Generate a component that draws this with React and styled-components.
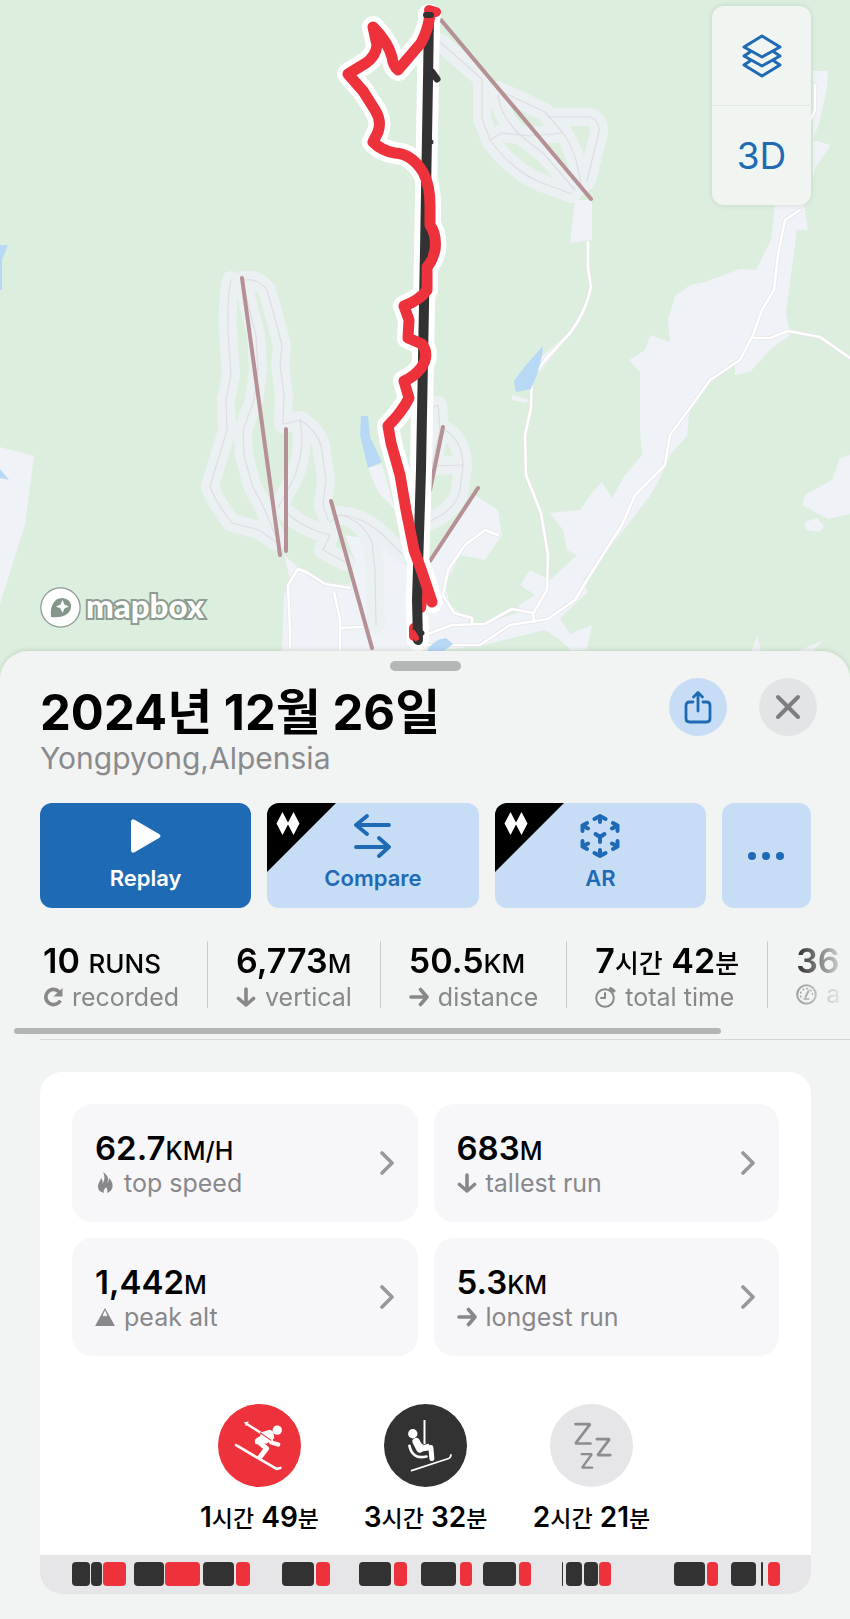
import React from "react";
import styled, { createGlobalStyle, css } from "styled-components";

const BLUE = "#1f6ab5";
const RED = "#ee323b";
const DARK = "#323232";

const GlobalStyle = createGlobalStyle`
  *, *::before, *::after { box-sizing: border-box; }
  body {
    margin: 0;
    background: #f2f4f3;
    color: #000;
    font-family: Inter, "Noto Sans CJK KR", sans-serif;
  }
  button { font: inherit; color: inherit; border: 0; margin: 0; padding: 0; background: none; cursor: pointer; }
  h1, p, ul, dl, dd, dt { margin: 0; padding: 0; }
  ul { list-style: none; }
  svg { display: block; flex: none; }
`;

const Page = styled.main`
  position: relative;
  min-width: 0;
  overflow: hidden;
`;

const MapArea = styled.section`
  position: relative;
  background: #dceede;
`;

const MapDrawing = styled.svg`
  width: 100%;
  height: auto;
`;

const MapControls = styled.div`
  position: absolute;
  top: 6px;
  right: 39px;
  width: 99px;
  display: flex;
  flex-direction: column;
  border-radius: 12px;
  background: rgba(241, 245, 241, 0.96);
  box-shadow: 0 0 5px rgba(60, 90, 60, 0.16);
`;

const MapControl = styled.button`
  height: 99px;
  display: flex;
  align-items: center;
  justify-content: center;
  color: ${BLUE};
  font-size: 37px;
  & + & { height: 100px; border-top: 1px solid #e2e8e4; }
`;

const Attribution = styled.a`
  position: absolute;
  left: 40px;
  bottom: 52px;
  display: flex;
  align-items: center;
  gap: 5px;
  color: #fff;
  font: 900 33px/34px Lato, sans-serif;
  text-decoration: none;
  -webkit-text-stroke: 4px #8d9c90;
  paint-order: stroke fill;
  span { padding-bottom: 6px; }
`;

const Sheet = styled.section`
  position: relative;
  margin-top: -29px;
  padding: 10px 0 25px;
  border-radius: 28px 28px 0 0;
  background: #f2f4f3;
  box-shadow: 0 -1px 4px rgba(60, 80, 60, 0.16);
`;

const Grabber = styled.div`
  width: 71px;
  height: 10px;
  margin: 0 auto;
  border-radius: 5px;
  background: #b5b7b7;
`;

const Header = styled.header`
  display: flex;
  align-items: flex-start;
  padding: 7px 33px 0 40px;
`;

const Heading = styled.div`
  flex: 1;
  min-width: 0;
  padding-top: 5px;
`;

const Title = styled.h1`
  font-size: 49px;
  font-weight: 700;
  line-height: 60px;
  white-space: nowrap;
`;

const Subtitle = styled.p`
  color: #8a8a8d;
  font-size: 30px;
  line-height: 30px;
`;

const HeaderButtons = styled.div`
  display: flex;
  gap: 32px;
`;

const RoundButton = styled.button`
  width: 58px;
  height: 58px;
  border-radius: 50%;
  display: flex;
  align-items: center;
  justify-content: center;
  background: ${(p) => (p.$muted ? "#e3e4e6" : "#c6ddf5")};
  color: ${(p) => (p.$muted ? "#7d7d80" : BLUE)};
`;

const Actions = styled.div`
  display: grid;
  grid-template-columns: 1fr 1fr 1fr 89px;
  gap: 16px;
  padding: 30px 39px 0 40px;
`;

const ActionButton = styled.button`
  position: relative;
  overflow: hidden;
  height: 105px;
  padding-bottom: ${(p) => (p.$iconOnly ? 0 : 8)}px;
  border-radius: 12px;
  display: flex;
  flex-direction: column;
  align-items: center;
  justify-content: center;
  gap: 9px;
  background: ${(p) => (p.$primary ? BLUE : "#c6ddf5")};
  color: ${(p) => (p.$primary ? "#fff" : BLUE)};
  font-size: 22px;
  font-weight: 600;
  line-height: 22px;
`;

const ProCorner = styled.svg`
  position: absolute;
  top: 0;
  left: 0;
`;

const StatStrip = styled.dl`
  display: flex;
  align-items: flex-start;
  overflow: hidden;
  padding: 33px 0 20px 15px;
  mask-image: linear-gradient(to right, #000 calc(100% - 66px), transparent);
`;

const Stat = styled.div`
  flex: none;
  display: flex;
  flex-direction: column-reverse;
  justify-content: flex-end;
  height: 67px;
  padding: 0 28px;
  white-space: nowrap;
  & + & { border-left: 1px solid #cbcdcd; }
`;

const Value = styled.dd`
  font-size: ${(p) => (p.$compact ? 33 : 34)}px;
  font-weight: 600;
  line-height: ${(p) => (p.$compact ? 36 : 39)}px;
  white-space: nowrap;
  small { font-size: ${(p) => (p.$compact ? 25 : 26)}px; font-weight: 500; }
`;

const Label = styled.dt`
  display: flex;
  align-items: center;
  gap: 9px;
  color: #88888b;
  font-size: 25px;
  line-height: 28px;
`;

const ScrollTrack = styled.div`
  padding: 0 14px;
`;

const ScrollThumb = styled.div`
  width: 86%;
  height: 6px;
  border-radius: 3px;
  background: #b3b5b4;
`;

const Divider = styled.div`
  margin: 5px 0 0 40px;
  height: 1px;
  background: #d6d8d7;
`;

const Card = styled.section`
  margin: 32px 39px 0 40px;
  border-radius: 22px;
  overflow: hidden;
  background: #fff;
`;

const Tiles = styled.div`
  display: grid;
  grid-template-columns: 1fr 1fr;
  gap: 16px;
  padding: 32px 32px 48px;
`;

const Tile = styled.button`
  height: 118px;
  padding: 0 24px 0 23px;
  border-radius: 20px;
  display: flex;
  align-items: center;
  justify-content: space-between;
  background: #f7f7fa;
  text-align: left;
  color: #98989b;
`;

const TileText = styled.dl`
  display: flex;
  flex-direction: column-reverse;
  ${Value} { color: #000; }
`;

const Activities = styled.ul`
  display: flex;
  justify-content: center;
  padding-bottom: 18px;
`;

const Activity = styled.li`
  width: 166px;
  display: flex;
  flex-direction: column;
  align-items: center;
  gap: 12px;
`;

const Duration = styled.span`
  font-size: 28px;
  font-weight: 600;
  line-height: 36px;
  white-space: nowrap;
  small { font-size: 23px; font-weight: 500; }
`;

const Badge = styled.div`
  width: 83px;
  height: 83px;
  border-radius: 50%;
  background: ${(p) => p.$color};
  color: ${(p) => p.$ink || "#fff"};
`;

const Timeline = styled.div`
  display: flex;
  height: 39px;
  padding: 7px 32px;
  background: #e6e6e8;
`;

const Segment = styled.div`
  flex: none;
  height: 24px;
  border-radius: 4px;
  background: ${(p) => (p.$run ? RED : DARK)};
  ${(p) => p.$thin && css`border-radius: 1px;`}
`;

const line = { fill: "none", stroke: "currentColor", strokeLinecap: "round", strokeLinejoin: "round" };

const LayersIcon = () => (
  <svg width="40" height="44" viewBox="0 0 40 44" {...line} strokeWidth="3">
    <path d="M20 2 38 13 20 23 2 13Z" />
    <path d="m8 18-6 4 18 10 18-10-6-4" />
    <path d="m8 27-6 4 18 11 18-11-6-4" />
  </svg>
);

const ShareIcon = () => (
  <svg width="28" height="34" viewBox="0 0 28 34" {...line} strokeWidth="2.800">
    <path d="M14 21V3M9.500 7 14 2.500 18.500 7" />
    <path d="M9 12H5.500Q2 12 2 15.500V28.500Q2 32 5.500 32H22.500Q26 32 26 28.500V15.500Q26 12 22.500 12H19" />
  </svg>
);

const CloseIcon = () => (
  <svg width="26" height="26" viewBox="0 0 26 26" {...line} strokeWidth="4">
    <path d="m3 3 20 20M23 3 3 23" />
  </svg>
);

const PlayIcon = () => (
  <svg width="32" height="44" viewBox="0 0 32 44">
    <path fill="currentColor" d="M1 8Q1 4 5 6L29 20Q32 22 29 24L5 38Q1 40 1 36Z" />
  </svg>
);

const CompareIcon = () => (
  <svg width="38" height="44" viewBox="0 0 38 44" {...line} strokeWidth="3.800">
    <path d="M35 11H2M13 2 2 11 13 20M2 33H35M25 24 35 33 25 42" />
  </svg>
);

const ArIcon = () => (
  <svg width="40" height="44" viewBox="0 0 40 44" {...line} strokeWidth="4">
    <path d="M14.500 5 20 2 25.500 5M20 2V8M14.500 39 20 42 25.500 39M20 42V36" />
    <path d="M2.500 17V11.500L7 9M2.500 11.500 8 14.500M37.500 17V11.500L33 9M37.500 11.500 32 14.500" />
    <path d="M2.500 27V32.500L7 35M2.500 32.500 8 29.500M37.500 27V32.500L33 35M37.500 32.500 32 29.500" />
    <path d="m15.500 20 4.500 3 4.500-3M20 23v5" />
  </svg>
);

const MoreIcon = () => (
  <svg width="36" height="8" viewBox="0 0 36 8" fill="currentColor">
    <circle cx="4" cy="4" r="4" /><circle cx="18" cy="4" r="4" /><circle cx="32" cy="4" r="4" />
  </svg>
);

const DoubleDiamond = () => (
  <ProCorner width="69" height="69" viewBox="0 0 69 69" aria-hidden="true">
    <path fill="#000" d="M0 0H69L0 69Z" />
    <path fill="#fff" d="m15.500 9 6 11.500-6 11.500-6-11.500ZM26.500 9l6 11.500-6 11.500-6-11.500Z" />
  </ProCorner>
);

const RepeatIcon = () => (
  <svg width="20" height="20" viewBox="0 0 20 20">
    <path fill="none" stroke="currentColor" strokeWidth="3.600" d="M16 4.800A7.600 7.600 0 1 0 17.200 13.500" />
    <path fill="currentColor" d="M19.500 1V9.500H10.500Z" />
  </svg>
);

const DownIcon = () => (
  <svg width="20" height="20" viewBox="0 0 20 20" {...line} strokeWidth="3.600"><path d="M10 2V18M2.500 11.500 10 18 17.500 11.500" /></svg>
);

const RightIcon = () => (
  <svg width="20" height="20" viewBox="0 0 20 20" {...line} strokeWidth="3.600"><path d="M2 10H18M11.500 2.500 18 10 11.500 17.500" /></svg>
);

const ClockIcon = () => (
  <svg width="21" height="22" viewBox="0 0 21 22" {...line} strokeWidth="2">
    <circle cx="10" cy="12" r="8.800" /><path d="M10 7V12H6" /><path strokeWidth="3" d="M15.500 2.500 19 5" />
  </svg>
);

const GaugeIcon = () => (
  <svg width="21" height="21" viewBox="0 0 21 21" {...line} strokeWidth="2">
    <circle cx="10.500" cy="10.500" r="9.300" />
    <path d="m9.500 13 3-6" />
    <path strokeDasharray="1 3" strokeWidth="1.500" d="M5 13A6 6 0 1 1 16 13" />
    <path strokeWidth="1.500" d="M8 15H13" />
  </svg>
);

const FlameIcon = () => (
  <svg width="20" height="21" viewBox="0 0 20 21" fill="currentColor">
    <path d="M8 0C14 4 14 8 12 11C13 10 14 9 14 6C17 9 18 12 17.500 15C17 18 15 20 12 21C13 18 12 17 11 15C10 17 8 18 9 21C5 20 3 18 3 15C3 11 5 10 6 6C8 8 8 10 7 12C10 9 10 4 8 0Z" />
  </svg>
);

const PeakIcon = () => (
  <svg width="20" height="18" viewBox="0 0 21 19">
    <path fill="currentColor" d="M10.500 0 21 19H0Z" />
    <path fill="#f7f7fa" d="m10.500 2.500 2.500 5.500-1.500 1-1-1-1 1-1.500-1Z" />
  </svg>
);

const Chevron = () => (
  <svg width="14" height="24" viewBox="0 0 14 24" {...line} strokeWidth="3.600"><path d="m2 2 10 10L2 22" /></svg>
);

const SkiIcon = () => (
  <svg width="83" height="83" viewBox="0 0 248 248" {...line}>
    <circle cx="177" cy="78" r="14" fill="currentColor" stroke="none" />
    <path strokeWidth="8" d="M54 123 175 194 186 191" />
    <path strokeWidth="7" d="M84 58 146 98" />
    <path strokeWidth="3" d="M79 56 90 54M83 64 90 54" />
    <path fill="currentColor" stroke="none" d="M132 84 152 78Q162 76 166 87L168 102Q158 110 146 118L112 120Q106 104 124 98Z" />
    <path strokeWidth="13" d="M154 91 159 115 180 121" />
    <path strokeWidth="15" d="M118 110 145 133 127 157" />
    <path stroke={RED} strokeWidth="3" d="M126 86 158 108" />
  </svg>
);

const LiftIcon = () => (
  <svg width="83" height="83" viewBox="0 0 248 248" {...line}>
    <circle cx="86" cy="89" r="14" fill="currentColor" stroke="none" />
    <path strokeWidth="6" strokeLinecap="butt" d="M121 48V120" />
    <path strokeWidth="22" d="m96 112 11 22" />
    <path strokeWidth="15" d="M108 135 140 130 143 163" />
    <path strokeWidth="6" d="M100 112 118 126 132 122" />
    <path strokeWidth="8" d="M76 125Q80 145 92 153Q104 162 127 157" />
    <path strokeWidth="5" d="M82 199 193 163Q200 160 200 152" />
  </svg>
);

const RestIcon = () => (
  <svg width="83" height="83" viewBox="0 0 248 248" fill="none" stroke="currentColor" strokeLinecap="round" strokeLinejoin="bevel">
    <path strokeWidth="8" d="M76 60H120L76 118H121" />
    <path strokeWidth="8" d="M140 105H178L142 153H180" />
    <path strokeWidth="7" d="M95 150H125L96 190H126" />
  </svg>
);

const MapboxMark = () => (
  <svg width="41" height="41" viewBox="0 0 41 41">
    <circle cx="20.500" cy="20.500" r="19" fill="#fff" stroke="#8d9c90" strokeWidth="2.500" />
    <path fill="#84968a" d="M11 30Q10 19 15 14C21 8 32 12 31 20C30 29 20 31 11 30Z" />
    <path fill="#fff" d="m22.500 13 2 4.500 4.500 2-4.500 2-2 4.500-2-4.500-4.500-2 4.500-2Z" />
  </svg>
);

const PISTES = [
  "M231 280Q227 300 228 330L231 375 226 400 227 430 210 486Q214 500 232 523L259 530 276 542",
  "M244 280Q258 278 267 290L274 315 282 345 280 365 284 395 283 424",
  "M246 295Q252 320 256 335L258 370 254 400 243 430 244 455 252 485 265 510 275 535",
  "M284 424 300 420Q316 430 321 445L326 480 323 505 328 520",
  "M300 420Q306 450 293 480L278 508",
  "M288 514Q300 525 320 532L330 535 323 550 345 562",
  "M330 522 340 515Q362 520 372 542L375 570 376 625",
  "M340 515Q365 517 385 537L402 554",
  "M440 42 482 79 482 118 490 140Q515 175 550 186L572 194",
  "M498 90 545 112 563 133Q576 150 581 185",
  "M498 95Q500 115 520 135L545 155 575 190",
  "M548 117 590 117Q600 120 599 132L587 181",
  "M490 140 502 133 530 136 563 133",
  "M445 430Q462 440 463 465L460 490Q456 510 430 521",
  "M432 408 438 405 440 430 432 466 463 465",
];

const LIFTS = [
  "M441 20 591 199", "M242 278 280 555", "M286 429V551", "M331 501 372 648",
  "M443 427 430 490", "M478 488 430 561",
];

const ROADS = [
  "M588 242 588 268 591 287Q586 312 570 333L545 360 532 378 531 408 525 435 526 475 541 513 548 555 547 590 534 612",
  "M815 85V110L808 125M800 210 785 220 778 255 774 290 762 310 753 335 740 360 710 380 690 408 670 435 665 465 635 495 622 525 590 575 575 600 548 619 510 625 480 645 425 645",
  "M753 338 770 338 788 331 820 337 850 358",
  "M425 635 452 625 485 624 512 609 533 613 534 622",
  "M290 648 290 630 288 585 298 569 308 573 325 584 350 588M334 592 340 620 340 650M340 628 362 627M472 624 472 618 454 613 443 595 448 570 465 545 485 530 498 535",
];

const LAND = [
  "M775 205 771 240 756 270 740 269 705 282 690 285 675 296 668 320 670 342 650 335 645 350 629 360 640 372 640 430 642 455 625 475 612 498 602 482 592 493 580 510 550 513 563 530 567 550 577 555 550 580 530 570 520 585 535 595 519 605 520 612 480 625 430 625 430 651 480 646 545 630 560 640 572 651 587 649 592 625 570 634 560 618 588 592 583 580 600 560 650 496 660 478 670 455 687 436 690 405 710 380 735 360 735 375 750 372 770 350 790 335 786 312 797 230 808 230 804 205Z",
  "M813 71 828 71 827 88 820 120 813 140 831 145 815 168 813 180Z",
  "M575 200 592 200 592 240 570 243Z",
  "M0 447 34 456 25 525 0 604Z",
  "M284 555 300 569 325 582 350 585 355 560 345 535 375 540 400 558 420 580 430 562 475 495 498 510 502 535 485 560 460 555 445 585 450 605 470 620 440 651 282 651 284 595 290 580Z",
  "M850 455 840 458 832 480 805 495 802 505 828 519 850 514Z",
  "M805 522 817 518 824 526 820 532 806 530Z",
  "M368 468 382 464 395 510 378 492Z",
  "M512 395 530 400 525 403 512 400ZM538 360 576 326 540 372Z",
  "M752 651 757 635 761 651ZM798 651 822 641 813 651Z",
];

const SKI_TRACK = "M430 15Q428 30 421 43L398 70Q393 66 392 57Q388 42 373 27L377 45Q376 56 366 63L348 74 363 91 375 110Q382 121 378 132L373 142Q382 151 395 153Q412 154 423 172Q430 185 430 205L430 225Q437 235 435 250Q432 262 427 267L427 290Q420 300 404 306L409 320 408 338 422 344Q430 355 421 368Q414 377 404 381L409 398Q402 412 388 426L391 443 400 475 406 510 414 550 422 572 432 602";
const LIFT_TRACK = "M429 15 428 80 425 250 421 470 417 600 418 640";

const TrailMap = () => (
  <MapDrawing viewBox="0 0 850 680" role="img" aria-label="Trail map">
    <rect width="850" height="680" fill="#dceede" />
    <g fill="#eff2f6">{LAND.map((d) => <path key={d} d={d} />)}</g>
    <g fill="none" strokeLinejoin="round" strokeLinecap="round">
      <g stroke="#ebf1f2" strokeWidth="18">{PISTES.map((d) => <path key={d} d={d} />)}</g>
      <g stroke="#dfdce3" strokeWidth="1.200">{PISTES.map((d) => <path key={d} d={d} />)}</g>
      <g stroke="#e4e4e8" strokeWidth="4">{ROADS.map((d) => <path key={d} d={d} />)}</g>
      <g stroke="#fff" strokeWidth="2.600">{ROADS.map((d) => <path key={d} d={d} />)}</g>
      <g stroke="#b59196" strokeWidth="4">{LIFTS.map((d) => <path key={d} d={d} />)}</g>
    </g>
    <g fill="#b7d9f6">
      <path d="M0 245H8L2 260V290H0ZM0 469 9 480 0 478Z" />
      <path d="M361 416H368L370 437 382 462 368 468 360 435Z" />
      <path d="M543 346Q542 365 531 389L516 392 514 381 526 365Z" />
      <path d="M427 651Q432 640 446 638L453 644 444 651Z" />
    </g>
    <g fill="none" strokeLinejoin="round" strokeLinecap="round">
      <g stroke="#fff" strokeWidth="22"><path d={SKI_TRACK} /><path d={LIFT_TRACK} /></g>
      <path stroke={RED} strokeWidth="10" d="M414 628V636M425 582 421 608M429 10 436 12" />
      <path stroke={DARK} strokeWidth="10" d={LIFT_TRACK} />
      <path stroke={DARK} strokeWidth="7" d="M432 72 437 79" />
      <path stroke={DARK} strokeWidth="5" d="M430 142H431M419 633H422" />
      <path stroke={RED} strokeWidth="11" d={SKI_TRACK} />
      <path stroke={DARK} strokeWidth="6" d="M426 15H431M425 238V255" />
      <path stroke={RED} strokeWidth="6" d="M413 633 416 638" />
    </g>
  </MapDrawing>
);

const STATS = [
  { value: <>10 <small>RUNS</small></>, label: "recorded", Icon: RepeatIcon },
  { value: <>6,773<small>M</small></>, label: "vertical", Icon: DownIcon },
  { value: <>50.5<small>KM</small></>, label: "distance", Icon: RightIcon },
  { value: <>7<small>시간</small> 42<small>분</small></>, label: "total time", Icon: ClockIcon },
  { value: "36", label: "a", Icon: GaugeIcon },
];

const RECORDS = [
  { value: "62.7", unit: "KM/H", label: "top speed", Icon: FlameIcon },
  { value: "683", unit: "M", label: "tallest run", Icon: DownIcon },
  { value: "1,442", unit: "M", label: "peak alt", Icon: PeakIcon },
  { value: "5.3", unit: "KM", label: "longest run", Icon: RightIcon },
];

const ACTIVITIES = [
  { hours: 1, minutes: 49, color: RED, Icon: SkiIcon },
  { hours: 3, minutes: 32, color: DARK, Icon: LiftIcon },
  { hours: 2, minutes: 21, color: "#e6e6e8", ink: "#8c8c8f", Icon: RestIcon },
];

// Each entry: start and end on a 707-unit day, then whether it is a ski run.
const DAY_LENGTH = 707;
const SEGMENTS = [
  [0, 18], [19, 30], [31, 54, 1], [62, 92], [93, 128, 1], [131, 162], [164, 178, 1],
  [210, 242], [244, 258, 1], [287, 319], [322, 335, 1], [349, 384], [388, 400, 1],
  [411, 444], [447, 459, 1], [490, 491], [494, 510], [512, 526], [527, 539, 1],
  [602, 633], [635, 646, 1], [659, 684], [689, 691], [696, 708, 1],
];

const percent = (units) => `${(units / DAY_LENGTH) * 100}%`;

export default function App() {
  return (
    <Page>
      <GlobalStyle />
      <MapArea>
        <TrailMap />
        <MapControls>
          <MapControl aria-label="Map layers"><LayersIcon /></MapControl>
          <MapControl>3D</MapControl>
        </MapControls>
        <Attribution href="#mapbox"><MapboxMark /><span>mapbox</span></Attribution>
      </MapArea>
      <Sheet>
        <Grabber />
        <Header>
          <Heading>
            <Title>2024년 12월 26일</Title>
            <Subtitle>Yongpyong,Alpensia</Subtitle>
          </Heading>
          <HeaderButtons>
            <RoundButton aria-label="Share"><ShareIcon /></RoundButton>
            <RoundButton $muted aria-label="Close"><CloseIcon /></RoundButton>
          </HeaderButtons>
        </Header>
        <Actions>
          <ActionButton $primary><PlayIcon />Replay</ActionButton>
          <ActionButton><DoubleDiamond /><CompareIcon />Compare</ActionButton>
          <ActionButton><DoubleDiamond /><ArIcon />AR</ActionButton>
          <ActionButton $iconOnly aria-label="More"><MoreIcon /></ActionButton>
        </Actions>
        <StatStrip>
          {STATS.map(({ value, label, Icon }) => (
            <Stat key={label}>
              <Label><Icon />{label}</Label>
              <Value>{value}</Value>
            </Stat>
          ))}
        </StatStrip>
        <ScrollTrack><ScrollThumb /></ScrollTrack>
        <Divider />
        <Card>
          <Tiles>
            {RECORDS.map(({ value, unit, label, Icon }) => (
              <Tile key={label}>
                <TileText>
                  <Label><Icon />{label}</Label>
                  <Value $compact>{value}<small>{unit}</small></Value>
                </TileText>
                <Chevron />
              </Tile>
            ))}
          </Tiles>
          <Activities>
            {ACTIVITIES.map(({ hours, minutes, color, ink, Icon }) => (
              <Activity key={color}>
                <Badge $color={color} $ink={ink}><Icon /></Badge>
                <Duration>{hours}<small>시간</small> {minutes}<small>분</small></Duration>
              </Activity>
            ))}
          </Activities>
          <Timeline>
            {SEGMENTS.map(([start, end, run], i) => (
              <Segment
                key={start}
                $run={run}
                $thin={end - start < 4}
                style={{
                  width: percent(end - start),
                  marginLeft: percent(start - (i ? SEGMENTS[i - 1][1] : 0)),
                }}
              />
            ))}
          </Timeline>
        </Card>
      </Sheet>
    </Page>
  );
}
